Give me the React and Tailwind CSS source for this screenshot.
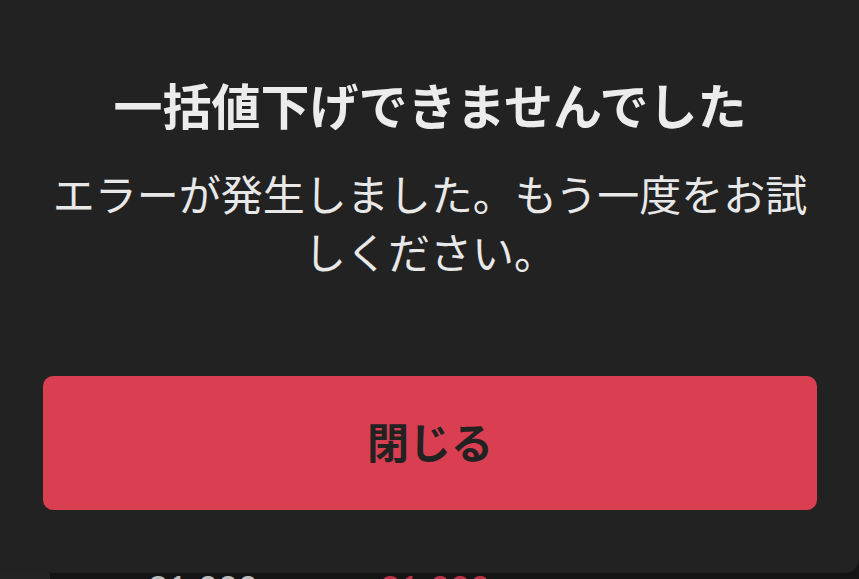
export default function App() {
  return (
    <div className="w-[859px] h-[579px] overflow-hidden bg-[#141414] flex flex-col" style={{ fontFamily: '"Noto Sans CJK JP", "Noto Sans", sans-serif' }}>
      <div className="relative z-10 h-[573px] shrink-0 bg-[#222222] rounded-br-[14px] flex flex-col items-center pt-[74px] pl-[43px] pr-[42px]">
        <h1 className="text-[49px] leading-[60px] font-bold text-[#ececec] whitespace-nowrap">一括値下げできませんでした</h1>
        <p className="mt-[30px] w-[790px] text-center text-[42px] leading-[58px] text-[#e8e8e8]">エラーが発生しました。もう一度をお試しください。</p>
        <button className="mt-[96px] w-full h-[134px] shrink-0 rounded-[10px] bg-[#d93e51] text-[#222222] text-[42px] font-bold flex items-center justify-center pb-[6px]">閉じる</button>
      </div>
      <div className="flex-1 flex">
        <div className="w-[50px] bg-[#232323]" />
        <div className="flex-1 relative bg-[#141414] overflow-hidden">
          <span className="absolute left-[98px] top-[-3px] text-[36px] leading-[40px] text-[#bdbdbd]" style={{ fontFamily: '"Liberation Sans", sans-serif' }}>21,000</span>
          <span className="absolute left-[246px] top-[1px] text-[30px] leading-[40px] text-[#bdbdbd]">↑</span>
          <span className="absolute left-[330px] top-[-3px] text-[36px] leading-[40px] text-[#c03046]" style={{ fontFamily: '"Liberation Sans", sans-serif' }}>21,000</span>
        </div>
      </div>
    </div>
  );
}
